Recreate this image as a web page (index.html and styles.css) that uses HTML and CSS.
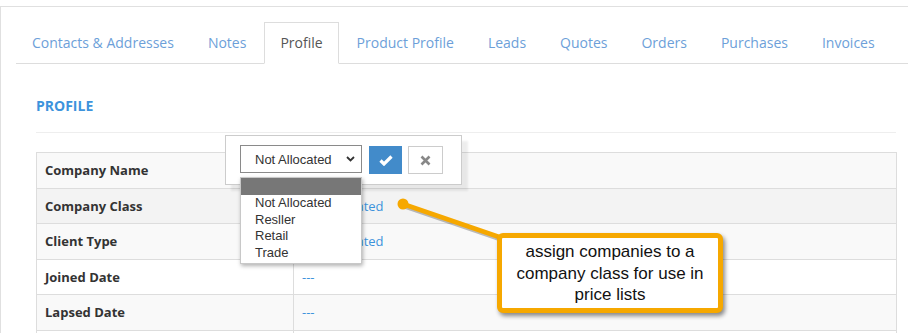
FILE: index.html
```html
<!DOCTYPE html>
<html lang="en">
<head>
    <meta charset="UTF-8">
    <meta name="viewport" content="width=device-width, initial-scale=1.0">
    <title>Company Profile</title>
    <link rel="stylesheet" href="styles.css">
</head>
<body>
    <div class="screen">
        <div class="panel">
            <ul class="tabs">
                <li><a href="#">Contacts &amp; Addresses</a></li>
                <li><a href="#">Notes</a></li>
                <li class="active"><a href="#">Profile</a></li>
                <li><a href="#">Product Profile</a></li>
                <li><a href="#">Leads</a></li>
                <li><a href="#">Quotes</a></li>
                <li><a href="#">Orders</a></li>
                <li><a href="#">Purchases</a></li>
                <li><a href="#">Invoices</a></li>
            </ul>
            <div class="tab-pane">
                <h3 class="section-title">PROFILE</h3>
                <table class="profile-table">
                    <tr class="striped"><th>Company Name</th><td></td></tr>
                    <tr class="hovered"><th>Company Class</th><td><a href="#">Not Allocated</a></td></tr>
                    <tr class="striped"><th>Client Type</th><td><a href="#">Not Allocated</a></td></tr>
                    <tr><th>Joined Date</th><td><a href="#">---</a></td></tr>
                    <tr class="striped"><th>Lapsed Date</th><td><a href="#">---</a></td></tr>
                    <tr><th>&nbsp;</th><td></td></tr>
                </table>
            </div>
        </div>

        <!-- inline editor popover -->
        <div class="editor">
            <div class="fake-select">
                <span>Not Allocated</span>
                <svg class="chevron" width="9" height="6" viewBox="0 0 9 6"><path d="M1 1l3.5 3.5L8 1" fill="none" stroke="#333" stroke-width="1.8"/></svg>
            </div>
            <button class="btn btn-ok">
                <svg width="14" height="11" viewBox="0 0 14 11"><path d="M1.5 5.5l3.5 3.5L12.5 1.5" fill="none" stroke="#fff" stroke-width="3.2"/></svg>
            </button>
            <button class="btn btn-cancel">
                <svg width="11" height="11" viewBox="0 0 11 11"><path d="M1.5 1.5l8 8M9.5 1.5l-8 8" fill="none" stroke="#888" stroke-width="2.6"/></svg>
            </button>
        </div>

        <ul class="options">
            <li class="selected">&nbsp;</li>
            <li>Not Allocated</li>
            <li>Resller</li>
            <li>Retail</li>
            <li>Trade</li>
        </ul>

        <svg class="connector" width="908" height="333">
            <line x1="403" y1="204" x2="505" y2="239" stroke="rgba(0,0,0,0.25)" stroke-width="5" transform="translate(1,2)"/>
            <line x1="403" y1="204" x2="505" y2="239" stroke="#f6a800" stroke-width="4.5" stroke-linecap="round"/>
            <circle cx="403" cy="204" r="5.5" fill="#f6a800"/>
        </svg>

        <div class="callout">assign companies to a company class for use in price lists</div>
    </div>
</body>
</html>
```

FILE: styles.css
```css
body {
    margin: 0;
    font-family: "Open Sans", Arial, sans-serif;
    background: #fff;
    overflow: hidden;
}
.screen {
    position: relative;
    width: 908px;
    height: 333px;
    overflow: hidden;
}
a {
    text-decoration: none;
}
.panel {
    margin-top: 6px;
    width: 940px;
    border: 1px solid #e0e0e0;
    padding: 15px 0 0 15px;
}
.tabs {
    display: flex;
    list-style: none;
    margin: 0;
    padding: 0;
    border-bottom: 1px solid #ddd;
}
.tabs li {
    margin-right: 2px;
    margin-bottom: -1px;
}
.tabs a {
    display: block;
    padding: 10px 15px;
    font-size: 14px;
    line-height: 20px;
    color: #6d9fd9;
    border: 1px solid transparent;
}
.tabs .active a {
    color: #555;
    background: #fff;
    border-color: #ddd #ddd transparent;
}
.tab-pane {
    padding: 32px 0 0 20px;
    width: 860px;
}
.section-title {
    margin: 0;
    font-size: 14px;
    line-height: 20px;
    font-weight: 700;
    color: #3d93dc;
    padding-bottom: 16px;
    border-bottom: 1px solid #eee;
}
.profile-table {
    margin-top: 19px;
    width: 861px;
    border-collapse: collapse;
    font-size: 13px;
    line-height: 1.42857;
}
.profile-table th,
.profile-table td {
    border: 1px solid #ddd;
    padding: 8px;
    text-align: left;
}
.profile-table th {
    width: 240px;
    font-weight: 700;
    color: #333;
}
.profile-table td a {
    color: #3d93dc;
}
.profile-table .striped {
    background: #f9f9f9;
}
.profile-table .hovered {
    background: #f3f3f3;
}

.editor {
    position: absolute;
    left: 225px;
    top: 135px;
    width: 237px;
    height: 50px;
    box-sizing: border-box;
    background: #fff;
    border: 1px solid #ccc;
    box-shadow: 6px 6px 2px rgba(0, 0, 0, 0.07);
    display: flex;
    align-items: flex-start;
    padding: 9px 0 0 14px;
}
.fake-select {
    width: 122px;
    height: 28px;
    box-sizing: border-box;
    border: 1px solid #8a8a8a;
    display: flex;
    align-items: center;
    justify-content: space-between;
    padding: 0 6px 0 14px;
    font-family: Arial, "Liberation Sans", sans-serif;
    font-size: 13px;
    color: #333;
}
.btn {
    height: 28px;
    margin-top: 1px;
    border: 1px solid #ccc;
    display: flex;
    align-items: center;
    justify-content: center;
    padding: 0;
}
.btn-ok {
    width: 33px;
    margin-left: 7px;
    background: #428bca;
    border-color: #428bca;
}
.btn-cancel {
    width: 35px;
    margin-left: 6px;
    background: #fff;
}
.options {
    position: absolute;
    left: 240px;
    top: 177px;
    width: 122px;
    box-sizing: border-box;
    margin: 0;
    padding: 0 0 2px;
    list-style: none;
    background: #fff;
    border: 1px solid #c8c8c8;
    box-shadow: 1px 2px 4px rgba(0, 0, 0, 0.3);
    font-family: Arial, "Liberation Sans", sans-serif;
    font-size: 13px;
    color: #333;
}
.options li {
    height: 16.5px;
    line-height: 16.5px;
    padding-left: 14px;
}
.options .selected {
    background: #777;
    height: 17px;
}
.connector {
    position: absolute;
    left: 0;
    top: 0;
}
.callout {
    position: absolute;
    left: 497px;
    top: 233px;
    width: 226px;
    height: 80px;
    box-sizing: border-box;
    border: 5px solid #f6a800;
    border-radius: 6px;
    background: #fff;
    box-shadow: 2px 3px 4px rgba(0, 0, 0, 0.45);
    padding: 3px 6px 0;
    text-align: center;
    font-family: Arial, "Liberation Sans", sans-serif;
    font-size: 17px;
    line-height: 21.5px;
    color: #111;
}
```
